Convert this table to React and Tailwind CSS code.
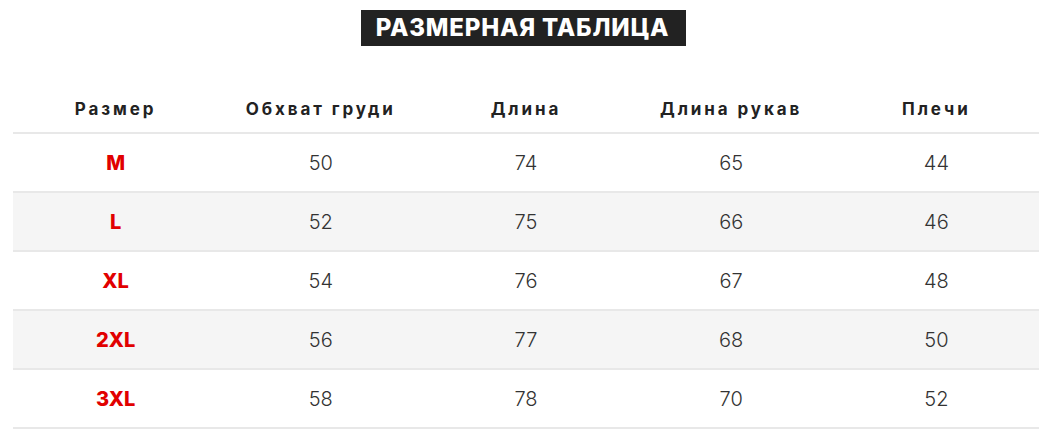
const rows = [
  ['M', '50', '74', '65', '44'],
  ['L', '52', '75', '66', '46'],
  ['XL', '54', '76', '67', '48'],
  ['2XL', '56', '77', '68', '50'],
  ['3XL', '58', '78', '70', '52'],
]

const headers = ['Размер', 'Обхват груди', 'Длина', 'Длина рукав', 'Плечи']

export default function App() {
  return (
    <div className="w-[1053px] h-[441px] bg-white overflow-hidden" style={{ fontFamily: 'Inter, "Noto Sans", sans-serif' }}>
      <div className="flex justify-center pt-[10px]">
        <h1 className="bg-[#222222] text-white font-extrabold text-[24px] leading-[36px] h-[36px] pl-[15px] pr-[17px] -translate-x-[3px] tracking-[0.8px]">
          РАЗМЕРНАЯ ТАБЛИЦА
        </h1>
      </div>

      <table className="mt-[39px] ml-[13px] w-[1026px] table-fixed border-collapse">
        <thead>
          <tr className="h-[48px] border-b-[2px] border-[#e8e8e8]">
            {headers.map(h => (
              <th key={h} className="text-center text-[17px] font-bold text-[#222] tracking-[2.9px] pt-[2px]">{h}</th>
            ))}
          </tr>
        </thead>
        <tbody>
          {rows.map((r, i) => (
            <tr key={r[0]} className={`h-[59px] border-b-[2px] border-[#e8e8e8] ${i % 2 === 1 ? 'bg-[#f5f5f5]' : 'bg-white'}`}>
              {r.map((c, j) => (
                <td key={j} className={j === 0
                  ? 'text-center text-[20px] font-extrabold text-[#e10000]'
                  : 'text-center text-[20px] font-light text-[#333]'}>{c}</td>
              ))}
            </tr>
          ))}
        </tbody>
      </table>
    </div>
  )
}
